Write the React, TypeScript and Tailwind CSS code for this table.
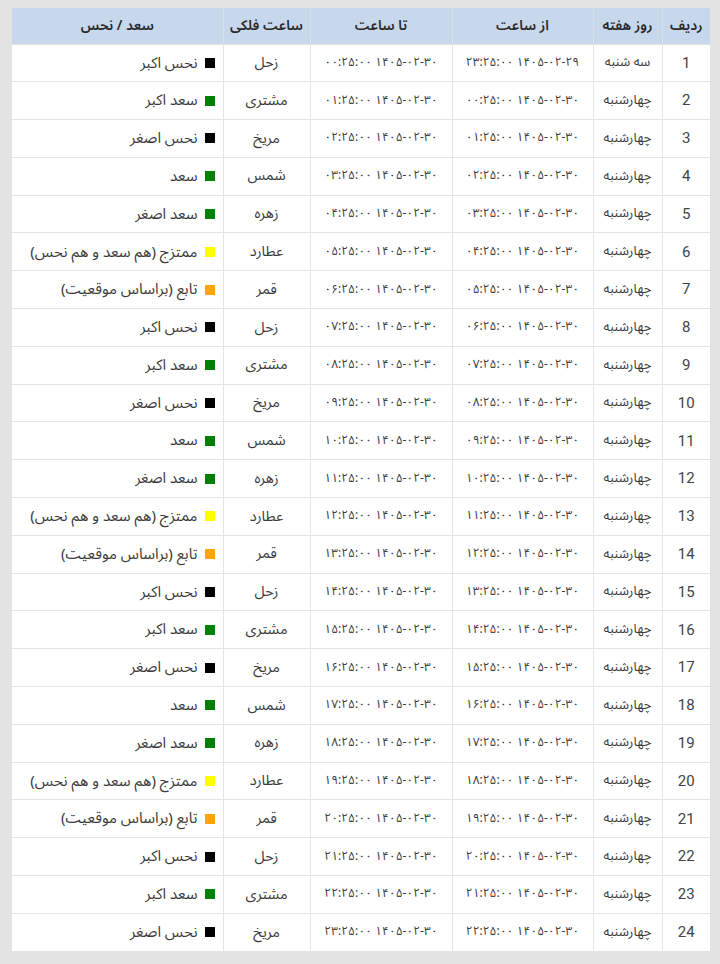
import React from "react";

const toFa = (s: string) => s.replace(/[0-9]/g, (d) => "۰۱۲۳۴۵۶۷۸۹"[+d]);
const pad = (n: number) => (n < 10 ? "0" + n : "" + n);

const planets = [
  { p: "زحل", s: "نحس اکبر", c: "bg-[#000000]" },
  { p: "مشتری", s: "سعد اکبر", c: "bg-[#008000]" },
  { p: "مریخ", s: "نحس اصغر", c: "bg-[#000000]" },
  { p: "شمس", s: "سعد", c: "bg-[#008000]" },
  { p: "زهره", s: "سعد اصغر", c: "bg-[#008000]" },
  { p: "عطارد", s: "ممتزج (هم سعد و هم نحس)", c: "bg-[#ffff00]" },
  { p: "قمر", s: "تابع (براساس موقعیت)", c: "bg-[#ffa500]" },
];

const rows = Array.from({ length: 24 }, (_, i) => {
  const pl = planets[i % 7];
  const from =
    i === 0 ? "1405-02-29 23:25:00" : `1405-02-30 ${pad(i - 1)}:25:00`;
  const to = `1405-02-30 ${pad(i)}:25:00`;
  return {
    n: i + 1,
    day: i === 0 ? "سه شنبه" : "چهارشنبه",
    from: toFa(from),
    to: toFa(to),
    ...pl,
  };
});

const font = {
  fontFamily: '"Noto Sans Arabic", "DejaVu Sans", sans-serif',
};

export default function App() {
  return (
    <div className="min-h-[964px] w-[720px] bg-[#e3e3e3] pt-[8px] pl-[12px]">
      <table
        dir="rtl"
        className="w-[698px] table-fixed border-collapse bg-white text-[13px] text-[#3a3a3a]"
        style={font}
      >
        <colgroup>
          <col className="w-[48px]" />
          <col className="w-[69px]" />
          <col className="w-[141px]" />
          <col className="w-[142px]" />
          <col className="w-[87px]" />
          <col className="w-[211px]" />
        </colgroup>
        <thead>
          <tr className="h-[36px] bg-[#c7d7ec] text-[14px] text-[#2a2a2a]">
            {["ردیف", "روز هفته", "از ساعت", "تا ساعت", "ساعت فلکی", "سعد / نحس"].map(
              (h) => (
                <th
                  key={h}
                  className="border-l border-[#d6e0ee] text-center font-semibold last:border-l-0"
                >
                  {h}
                </th>
              )
            )}
          </tr>
        </thead>
        <tbody>
          {rows.map((r) => (
            <tr key={r.n} className="h-[37.8px] border-t border-[#e4e4e4]">
              <td
                className="border-l border-[#e4e4e4] text-center text-[15px] text-[#444]"
                style={{ fontFamily: 'Roboto, "Open Sans", sans-serif' }}
              >
                {r.n}
              </td>
              <td className="border-l border-[#e4e4e4] text-center">{r.day}</td>
              <td className="border-l border-[#e4e4e4] text-center text-[12px]">{r.from}</td>
              <td className="border-l border-[#e4e4e4] text-center text-[12px]">{r.to}</td>
              <td className="border-l border-[#e4e4e4] text-center text-[14.5px]">{r.p}</td>
              <td className="pr-[8px] text-right text-[15px]">
                <span className="inline-flex items-center gap-[7px]">
                  <span className={`inline-block h-[10px] w-[10px] ${r.c}`} />
                  <span>{r.s}</span>
                </span>
              </td>
            </tr>
          ))}
        </tbody>
      </table>
    </div>
  );
}
